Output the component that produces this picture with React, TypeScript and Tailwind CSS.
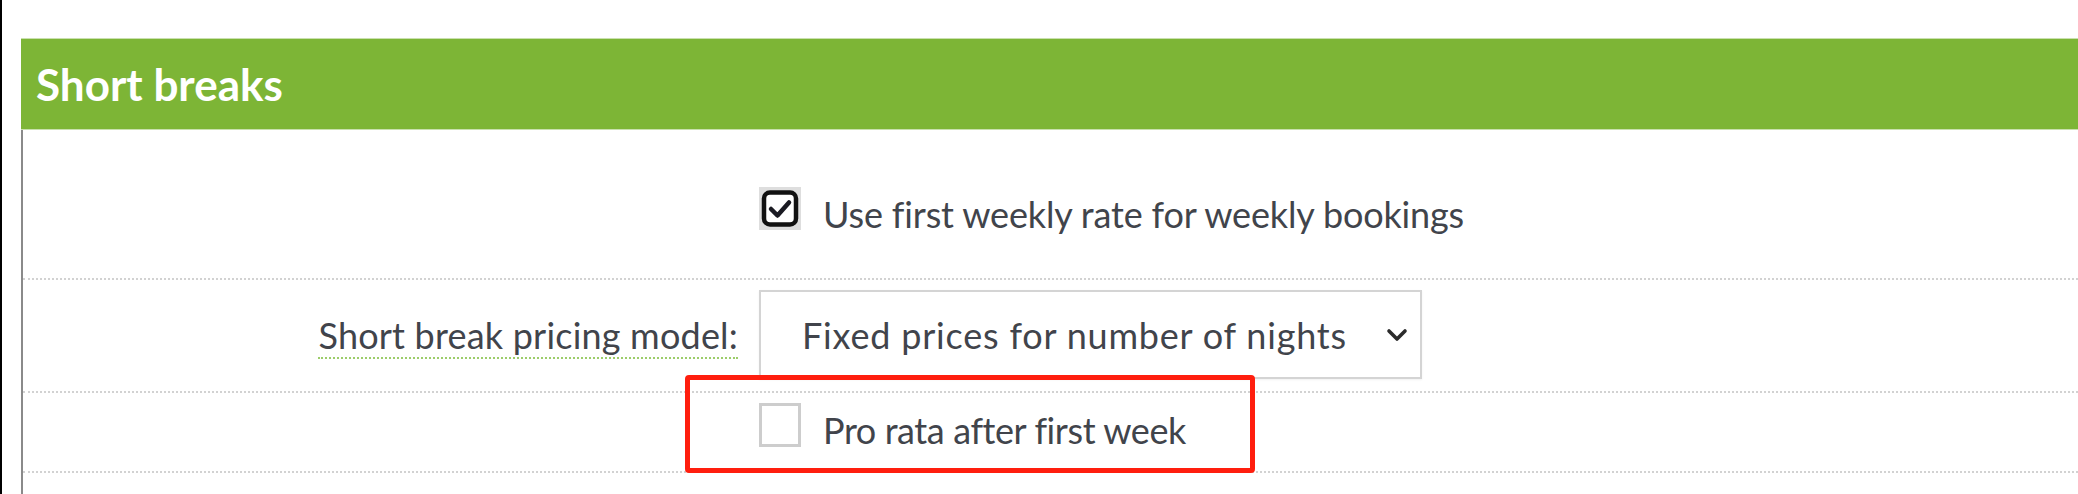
import React from "react";

function CheckedBox() {
  return (
    <svg width="42" height="43" viewBox="0 0 42 43" className="shrink-0">
      <rect x="0" y="0" width="42" height="43" fill="#dedede" />
      <rect x="5" y="5.5" width="32" height="32" rx="6" fill="#ffffff" stroke="#111111" strokeWidth="4.5" />
      <polyline points="12,22 18.5,28.5 30,15.5" fill="none" stroke="#1a1a22" strokeWidth="4.5" strokeLinecap="round" strokeLinejoin="round" />
    </svg>
  );
}

function UncheckedBox() {
  return <div className="w-[42px] h-[44px] shrink-0 border-[3px] border-[#cdcdcd] bg-white" />;
}

export default function App() {
  return (
    <div
      className="relative w-[2078px] h-[494px] overflow-hidden bg-white border-l-2 border-black text-[#41444b]"
      style={{ fontFamily: "Lato, 'Open Sans', sans-serif" }}
    >
      <div className="pt-[38px] pl-[19px]">
        <div className="h-[92px] bg-[#7db536] border-t border-b border-[#c9e0ae] flex items-center pl-[15px]">
          <h2 className="text-[44px] font-bold text-white leading-none">Short breaks</h2>
        </div>
        <div className="border-l-2 border-[#8a8a8a]">
          {/* Row 1 */}
          <div className="h-[150px] border-b-2 border-dotted border-[#d2d2d2] grid grid-cols-[736px_1fr]">
            <div />
            <div className="flex items-start gap-[22px] pt-[57px]">
              <CheckedBox />
              <span className="text-[36px] leading-[42px] mt-[6px] whitespace-nowrap tracking-[-0.15px]">Use first weekly rate for weekly bookings</span>
            </div>
          </div>
          {/* Row 2 */}
          <div className="h-[113px] border-b-2 border-dotted border-[#d2d2d2] grid grid-cols-[736px_1fr]">
            <div className="flex justify-end items-start pr-[21px] pt-[34px]">
              <span className="text-[36px] leading-[42px] border-b-2 border-dotted border-[#9ccd6a] pb-[1px] whitespace-nowrap tracking-[0.2px]">
                Short break pricing model:
              </span>
            </div>
            <div className="flex items-start pt-[10px]">
              <div className="w-[663px] h-[89px] border-2 border-[#d4d4d4] bg-white flex items-center pl-[41px] pr-[10px] shadow-[0_1px_2px_rgba(0,0,0,0.06)]">
                <span className="text-[36px] leading-[42px] flex-1 whitespace-nowrap tracking-[0.8px]">Fixed prices for number of nights</span>
                <svg width="22" height="14" viewBox="0 0 22 14" className="mr-[2px]">
                  <polyline points="3,3 11,11 19,3" fill="none" stroke="#2b2b2b" strokeWidth="3.6" strokeLinecap="round" strokeLinejoin="round" />
                </svg>
              </div>
            </div>
          </div>
          {/* Row 3 */}
          <div className="h-[80px] border-b-2 border-dotted border-[#d2d2d2] grid grid-cols-[736px_1fr]">
            <div />
            <div className="flex items-start gap-[22px] pt-[10px]">
              <UncheckedBox />
              <span className="text-[36px] leading-[42px] mt-[6px] whitespace-nowrap tracking-[-0.4px]">Pro rata after first week</span>
            </div>
          </div>
          <div className="h-[30px]" />
        </div>
      </div>
      {/* annotation */}
      <div className="absolute left-[683px] top-[375px] w-[570px] h-[98px] border-[5px] border-[#ff1e0e] rounded-[4px] pointer-events-none" />
    </div>
  );
}
